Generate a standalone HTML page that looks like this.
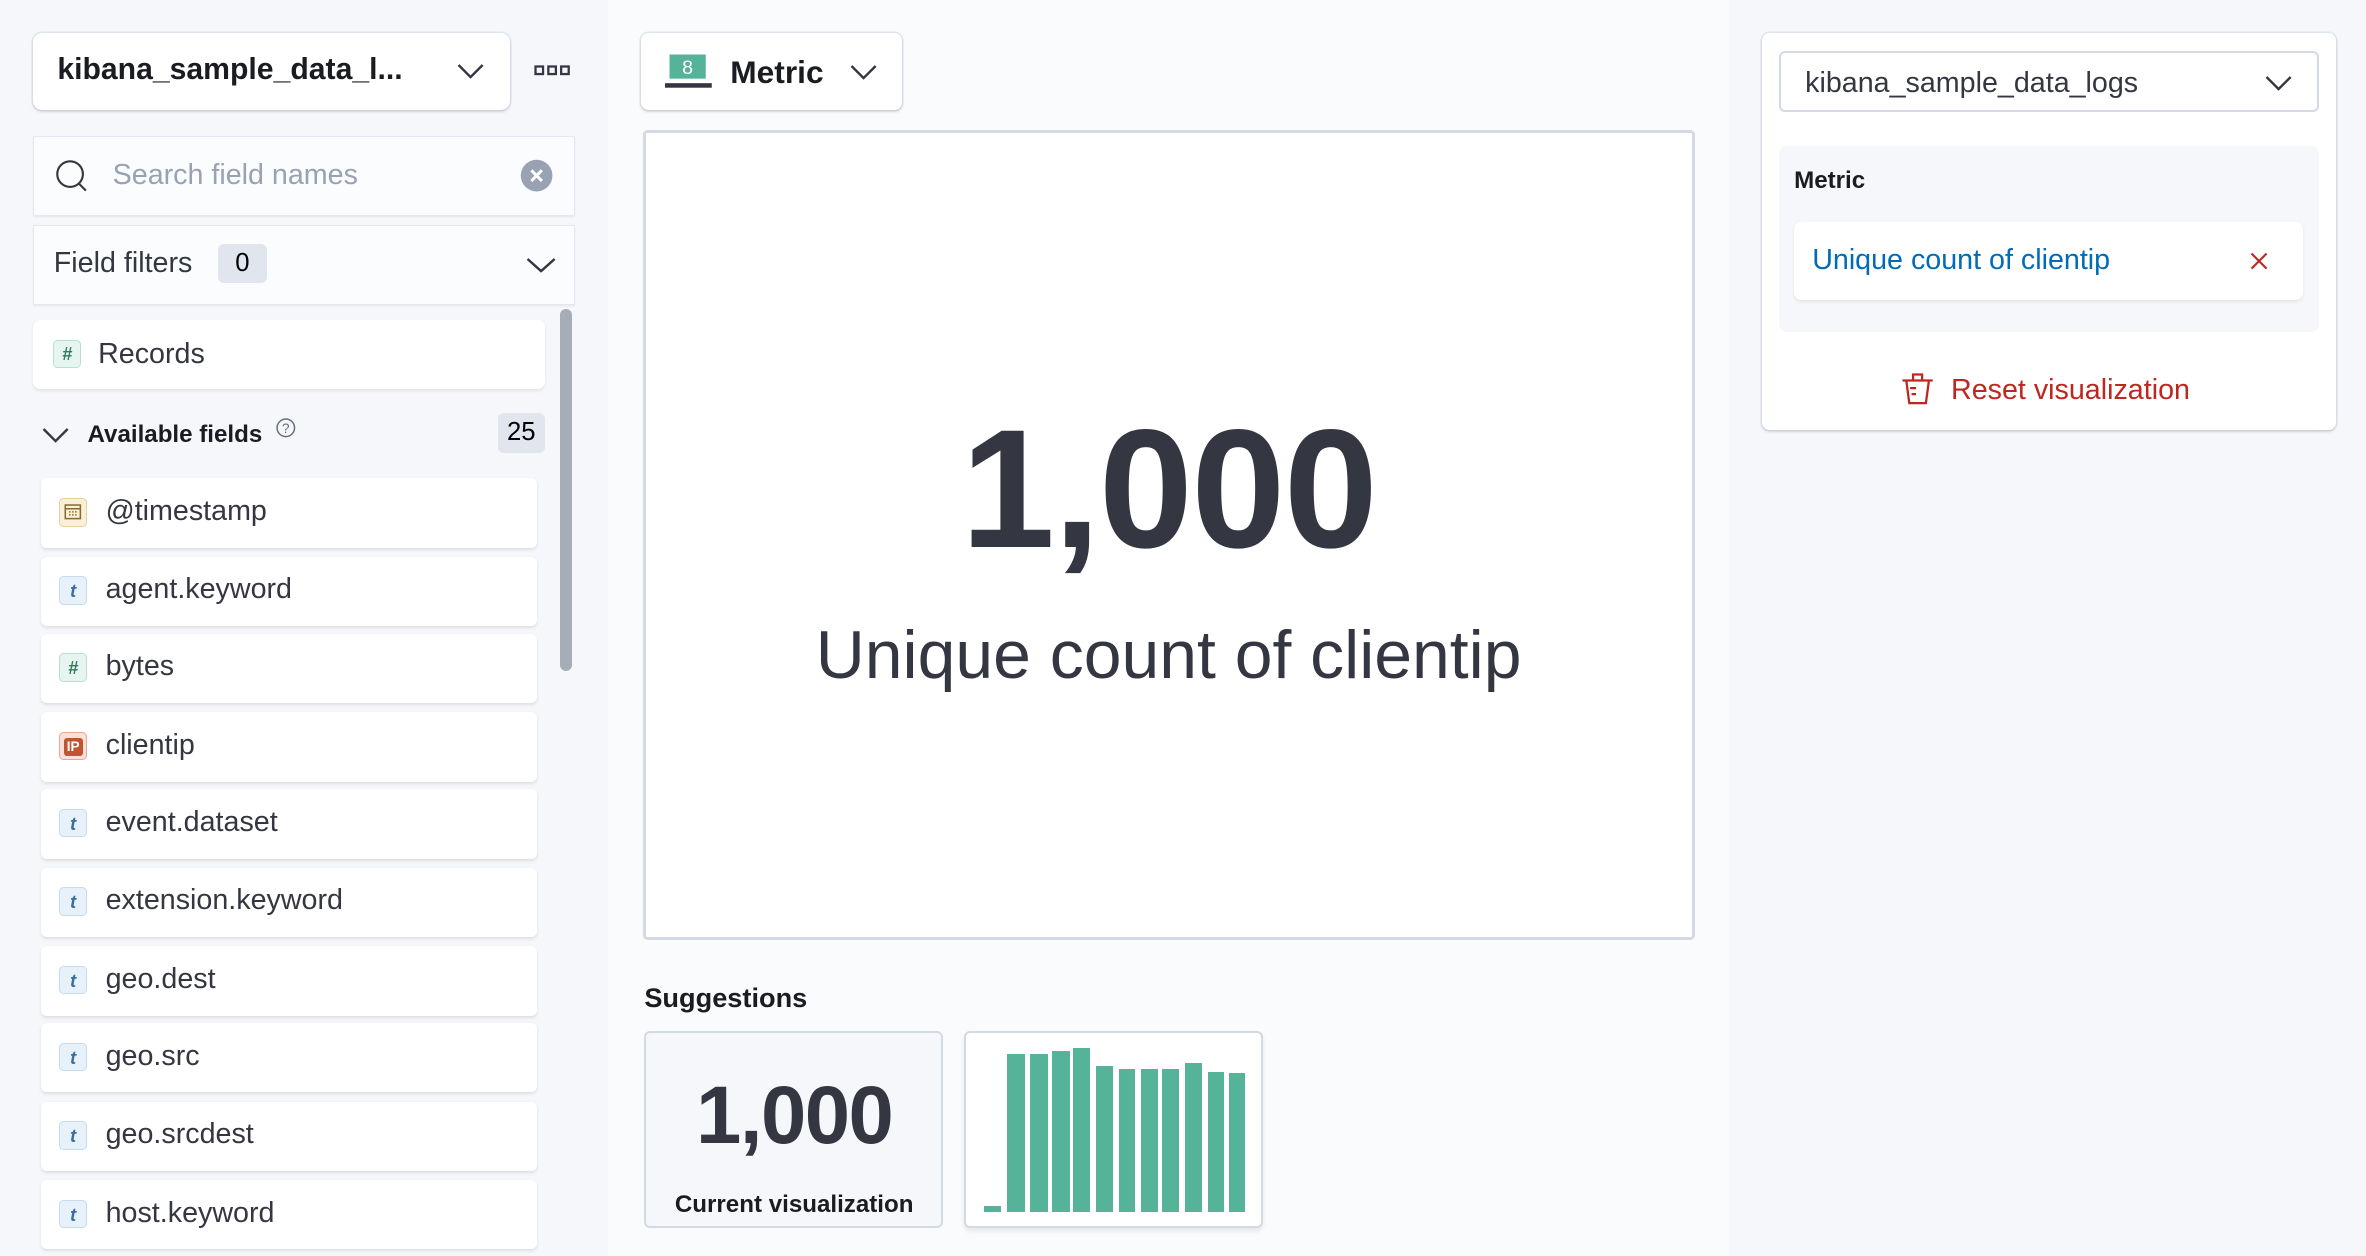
<!DOCTYPE html>
<html><head><meta charset="utf-8"><style>
*{box-sizing:border-box;margin:0;padding:0}
html,body{width:2366px;height:1256px;overflow:hidden}
body{background:#fafbfd;font-family:"Liberation Sans",sans-serif;color:#343741}
#root{zoom:1.50893;width:1568px;height:833px;position:relative}
.abs{position:absolute}
.left{left:0;top:0;width:403px;height:833px;background:#f5f7fa}
.right{left:1146px;top:0;width:422px;height:833px;background:#f5f7fa}
.card{background:#fff;border-radius:4px;box-shadow:0 1px 2px rgba(0,0,0,.12),0 0 0 1px #e3e8f0}
.field{left:27px;width:329px;height:46px;background:#fff;border-radius:4px;box-shadow:0 1px 2px rgba(0,0,0,.10)}
.field .ic{position:absolute;left:12px;top:13px;width:19px;height:19px;border-radius:3px;font-size:12px;font-style:italic;font-weight:bold;text-align:center;line-height:19px}
.field .t{position:absolute;left:43px;top:11px;font-size:19px;color:#343741}
.ict{background:#e6f1fa;border:1px solid #c6dcee;color:#3b6e9b}
.icn{background:#e6f5ef;border:1px solid #b7e0cf;color:#307c5b}
.bar{position:absolute;background:#54b399;bottom:0}
</style></head><body><div id="root">
<div class="abs left"></div>
<div class="abs right"></div>

<div class="abs card" style="left:22px;top:22px;width:316px;height:51px;border-radius:6px">
<div class="abs" style="left:16px;top:13px;font-size:20px;font-weight:bold;color:#1a1c21">kibana_sample_data_l...</div>
<svg class="abs" style="left:281px;top:19px" width="18" height="12" viewBox="0 0 18 12"><path d="M1 2l8 8 8-8" fill="none" stroke="#343741" stroke-width="1.6"/></svg>
</div>
<svg class="abs" style="left:354px;top:43px" width="24" height="8"><rect x="1" y="1" width="5" height="5" fill="none" stroke="#343741" stroke-width="1.5"/><rect x="9.5" y="1" width="5" height="5" fill="none" stroke="#343741" stroke-width="1.5"/><rect x="18" y="1" width="5" height="5" fill="none" stroke="#343741" stroke-width="1.5"/></svg>

<div class="abs" style="left:22px;top:90px;width:359px;height:53px;background:#fbfcfd;border:1px solid #e3e8f0;box-shadow:0 1px 1px rgba(0,0,0,.05)">
<svg class="abs" style="left:14px;top:15px" width="24" height="24" viewBox="0 0 24 24"><circle cx="10" cy="10" r="8.5" fill="none" stroke="#343741" stroke-width="1.4"/><path d="M15.5 16l5 5" stroke="#343741" stroke-width="1.4"/></svg>
<div class="abs" style="left:52px;top:15px;font-size:19px;color:#98a2b3">Search field names</div>
<svg class="abs" style="left:322px;top:15px" width="22" height="22"><circle cx="11" cy="11" r="10.5" fill="#98a2b3"/><path d="M7.5 7.5l7 7M14.5 7.5l-7 7" stroke="#fff" stroke-width="2"/></svg>
</div>
<div class="abs" style="left:22px;top:149px;width:359px;height:53px;background:#fbfcfd;border:1px solid #e3e8f0;box-shadow:0 1px 1px rgba(0,0,0,.05)">
<div class="abs" style="left:13px;top:14px;font-size:19px;color:#343741">Field filters</div>
<div class="abs" style="left:122px;top:12px;width:32px;height:26px;background:#e0e5ee;border-radius:4px;text-align:center;line-height:26px;font-size:17px;color:#000">0</div>
<svg class="abs" style="left:326px;top:20px" width="20" height="12" viewBox="0 0 20 12"><path d="M1 2l9 8 9-8" fill="none" stroke="#343741" stroke-width="1.6"/></svg>
</div>
<div class="abs" style="left:371px;top:205px;width:8px;height:240px;background:#a7adb6;border-radius:4px"></div>

<div class="abs" style="left:22px;top:212px;width:339px;height:46px;background:#fff;border-radius:5px;box-shadow:0 1px 2px rgba(0,0,0,.08)">
<div class="abs icn" style="left:13px;top:13px;width:19px;height:19px;border-radius:3px;font-size:12px;font-style:italic;font-weight:bold;text-align:center;line-height:18px">#</div>
<div class="abs" style="left:43px;top:12px;font-size:19px">Records</div>
</div>
<svg class="abs" style="left:28px;top:282px" width="18" height="12" viewBox="0 0 18 12"><path d="M1 2l8 8 8-8" fill="none" stroke="#343741" stroke-width="1.6"/></svg>
<div class="abs" style="left:58px;top:279px;font-size:16px;font-weight:bold;color:#1a1c21">Available fields</div>
<svg class="abs" style="left:183px;top:277px" width="13" height="13"><circle cx="6.5" cy="6.5" r="5.8" fill="none" stroke="#69707d" stroke-width="1"/><text x="6.5" y="10" font-size="9" text-anchor="middle" fill="#69707d" font-family="Liberation Sans">?</text></svg>
<div class="abs" style="left:330px;top:274px;width:31px;height:26px;background:#e0e5ee;border-radius:4px;text-align:center;line-height:26px;font-size:17px;color:#000">25</div>

<div class="abs field" style="top:317px"><div class="ic" style="background:#fbefd9;border:1px solid #e8cfa0"><svg width="17" height="17" viewBox="0 0 17 17" style="display:block"><rect x="3.5" y="4" width="10" height="9" fill="none" stroke="#8a6a2b" stroke-width="1"/><path d="M3.5 6.5h10M6 8.5h1M8 8.5h1M10 8.5h1M6 10.5h1M8 10.5h1M10 10.5h1" stroke="#8a6a2b" stroke-width="1"/></svg></div><div class="t">@timestamp</div></div>
<div class="abs field" style="top:369px"><div class="ic ict">t</div><div class="t">agent.keyword</div></div>
<div class="abs field" style="top:420px"><div class="ic icn">#</div><div class="t">bytes</div></div>
<div class="abs field" style="top:472px"><div class="ic" style="background:#f9e0d9;border:1px solid #e8a896;color:#fff;font-style:normal;font-size:9px"><span style="display:inline-block;background:#c4542f;padding:0 2px;line-height:12px;margin-top:3px;border-radius:2px">IP</span></div><div class="t">clientip</div></div>
<div class="abs field" style="top:523px"><div class="ic ict">t</div><div class="t">event.dataset</div></div>
<div class="abs field" style="top:575px"><div class="ic ict">t</div><div class="t">extension.keyword</div></div>
<div class="abs field" style="top:627px"><div class="ic ict">t</div><div class="t">geo.dest</div></div>
<div class="abs field" style="top:678px"><div class="ic ict">t</div><div class="t">geo.src</div></div>
<div class="abs field" style="top:730px"><div class="ic ict">t</div><div class="t">geo.srcdest</div></div>
<div class="abs field" style="top:782px"><div class="ic ict">t</div><div class="t">host.keyword</div></div>

<div class="abs card" style="left:425px;top:22px;width:173px;height:51px;border-radius:5px">
<svg class="abs" style="left:16px;top:13px" width="32" height="25"><rect x="3" y="1" width="24" height="16" fill="#54b399"/><text x="15" y="14" font-size="13" fill="#fff" text-anchor="middle" font-family="Liberation Sans">8</text><rect x="0" y="20" width="31" height="3" fill="#343741"/></svg>
<div class="abs" style="left:59px;top:14px;font-size:21px;font-weight:bold;color:#1a1c21">Metric</div>
<svg class="abs" style="left:138px;top:20px" width="18" height="12" viewBox="0 0 18 12"><path d="M1 2l8 8 8-8" fill="none" stroke="#343741" stroke-width="1.6"/></svg>
</div>

<div class="abs" style="left:426px;top:86px;width:697px;height:537px;background:#fff;border:2px solid #d3dae6;border-radius:3px">
<div class="abs" style="left:0;width:693px;top:180px;text-align:center;font-size:112px;font-weight:bold;color:#343741;line-height:1;letter-spacing:-1px">1,000</div>
<div class="abs" style="left:0;width:693px;top:324px;text-align:center;font-size:45px;color:#343741;line-height:1">Unique count of clientip</div>
</div>

<div class="abs" style="left:427px;top:651px;font-size:18px;font-weight:bold;color:#1a1c21">Suggestions</div>
<div class="abs" style="left:427px;top:683px;width:198px;height:131px;background:#f5f7fa;border:1.5px solid #d3dae6;border-radius:4px">
<div class="abs" style="left:0;width:196px;top:28px;text-align:center;font-size:54px;font-weight:bold;line-height:1;letter-spacing:-1px">1,000</div>
<div class="abs" style="left:0;width:196px;top:105px;text-align:center;font-size:16px;font-weight:bold;color:#1a1c21">Current visualization</div>
</div>
<div class="abs" style="left:639px;top:683px;width:198px;height:131px;background:#fff;border:1.5px solid #d3dae6;border-radius:4px;box-shadow:0 2px 3px rgba(0,0,0,.08)">
<div class="abs" style="left:12px;top:10px;width:174px;height:109px">
<div class="bar" style="left:0;width:11px;height:4px"></div>
<div class="bar" style="left:15px;width:12px;height:105px"></div>
<div class="bar" style="left:30px;width:12px;height:105px"></div>
<div class="bar" style="left:45px;width:12px;height:107px"></div>
<div class="bar" style="left:59px;width:11px;height:109px"></div>
<div class="bar" style="left:74px;width:11px;height:97px"></div>
<div class="bar" style="left:89px;width:11px;height:95px"></div>
<div class="bar" style="left:104px;width:11px;height:95px"></div>
<div class="bar" style="left:118px;width:11px;height:95px"></div>
<div class="bar" style="left:133px;width:11px;height:99px"></div>
<div class="bar" style="left:148px;width:11px;height:93px"></div>
<div class="bar" style="left:162px;width:11px;height:92px"></div>
</div></div>

<div class="abs card" style="left:1168px;top:22px;width:380px;height:263px;border-radius:5px">
<div class="abs" style="left:11px;top:12px;width:358px;height:40px;border:1.5px solid #d3dae6;border-radius:4px">
<div class="abs" style="left:16px;top:9px;font-size:19px;color:#343741">kibana_sample_data_logs</div>
<svg class="abs" style="left:321px;top:14px" width="18" height="12" viewBox="0 0 18 12"><path d="M1 2l8 8 8-8" fill="none" stroke="#343741" stroke-width="1.6"/></svg>
</div>
<div class="abs" style="left:11px;top:75px;width:358px;height:123px;background:#f5f7fa;border-radius:5px">
<div class="abs" style="left:10px;top:14px;font-size:16px;font-weight:bold;color:#1a1c21">Metric</div>
<div class="abs" style="left:10px;top:50px;width:337px;height:52px;background:#fff;border-radius:5px;box-shadow:0 1px 2px rgba(0,0,0,.08)">
<div class="abs" style="left:12px;top:15px;font-size:19px;color:#006bb8">Unique count of clientip</div>
<svg class="abs" style="left:302px;top:20px" width="12" height="12"><path d="M1 1l10 10M11 1L1 11" stroke="#bd271e" stroke-width="1.4"/></svg>
</div></div>
<svg class="abs" style="left:92px;top:225px" width="22" height="22" viewBox="0 0 22 22"><path d="M1 5h20M8 5V1h6v4M3.5 5l2 15h11l2-15M6 10h4M7 14h3" fill="none" stroke="#bd271e" stroke-width="1.5"/></svg>
<div class="abs" style="left:125px;top:226px;font-size:19px;color:#bd271e">Reset visualization</div>
</div>
</div></body></html>
